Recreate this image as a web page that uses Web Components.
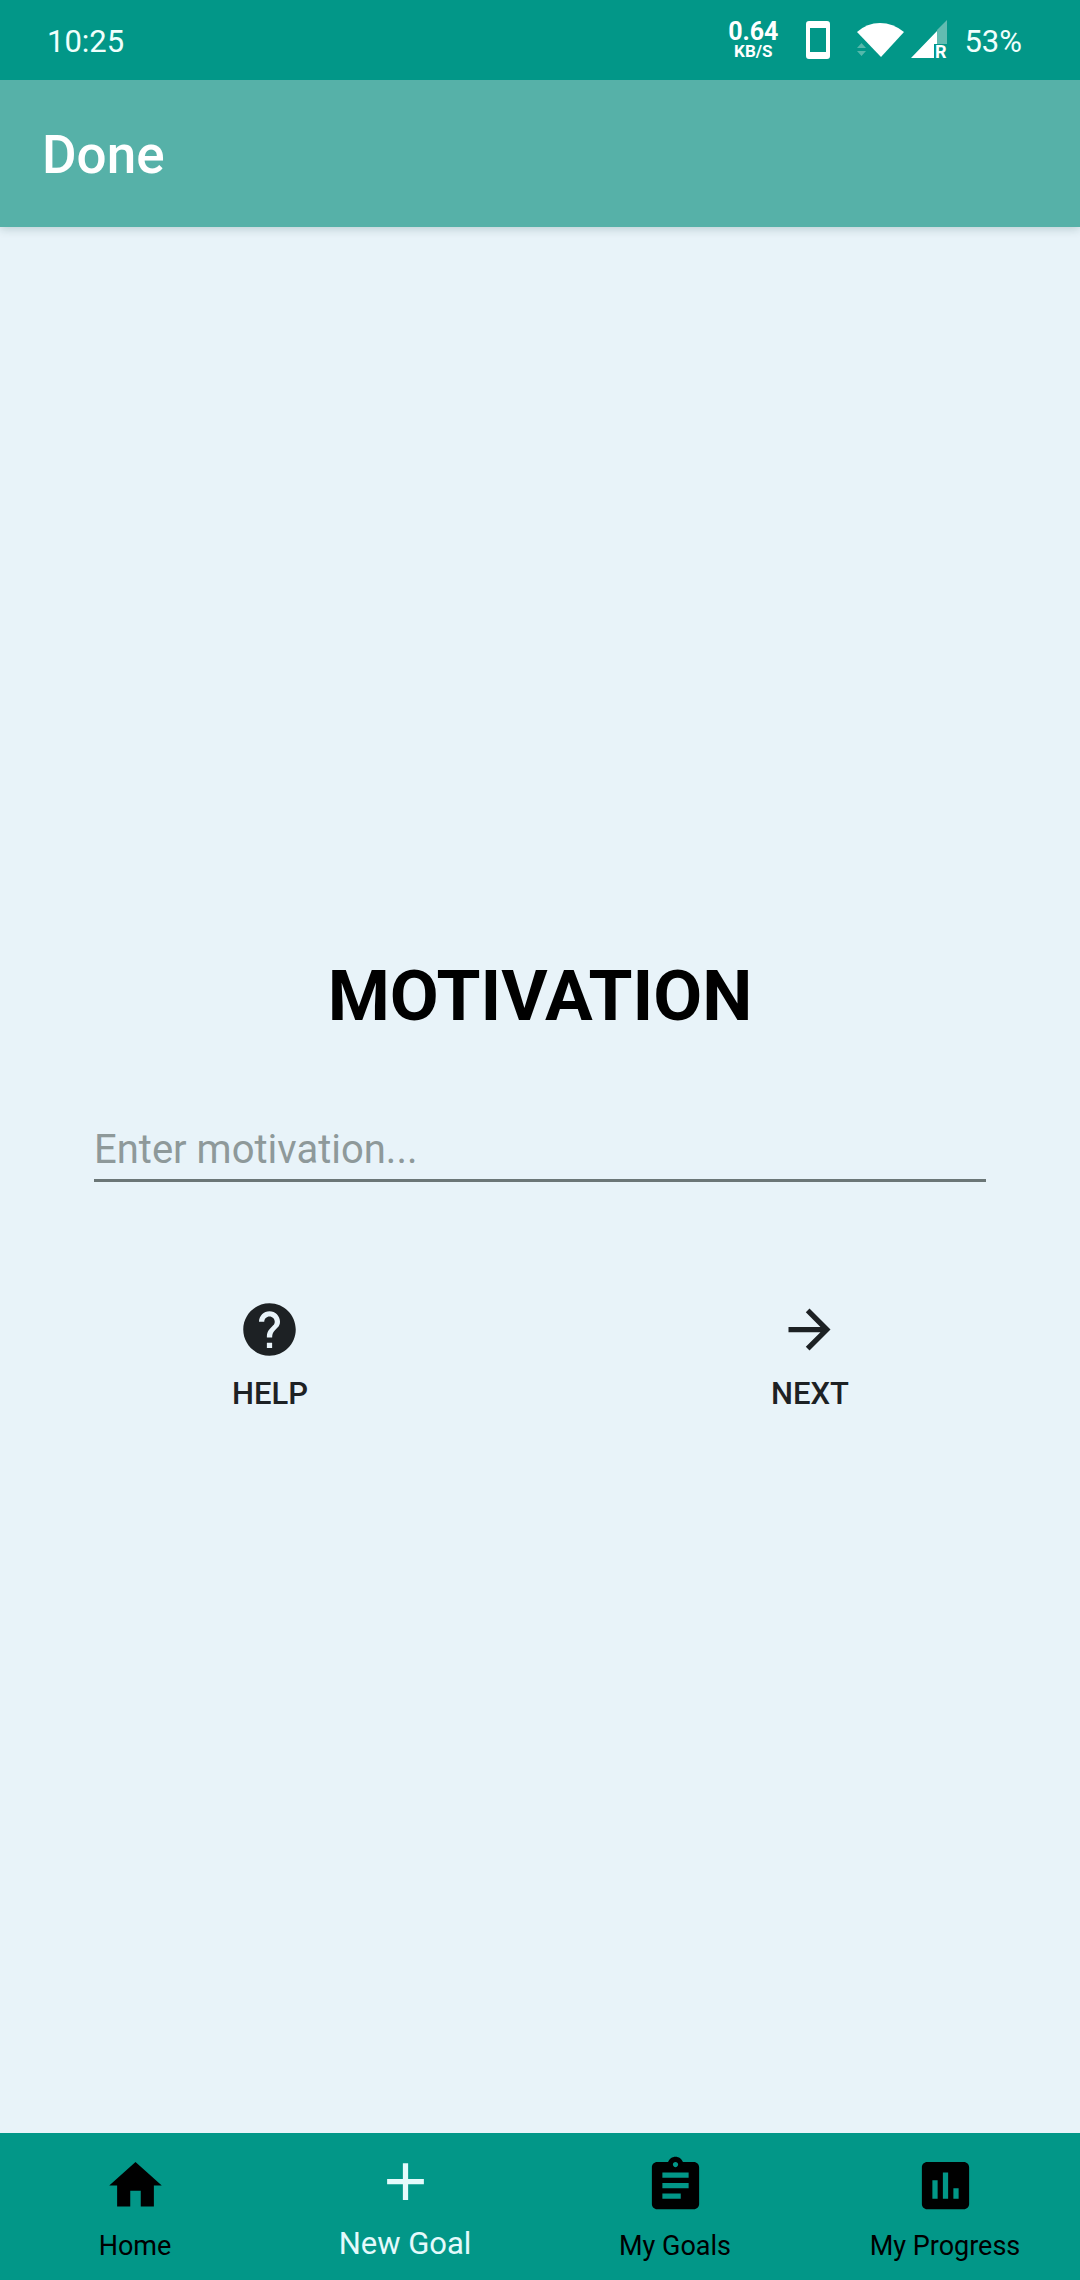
<!DOCTYPE html>
<html lang="en">
<head>
<meta charset="utf-8">
<meta name="viewport" content="width=device-width, initial-scale=1">
<title>Motivation</title>
<style>
  html, body { margin: 0; height: 100%; }
  body { font-family: Roboto, "Noto Sans", sans-serif; background: #e8f3f9; }
</style>
</head>
<body>
<goal-app></goal-app>
<script>
const ICONS = {
  help: '<path d="M12 2C6.48 2 2 6.48 2 12s4.48 10 10 10 10-4.48 10-10S17.52 2 12 2zm1 17h-2v-2h2v2zm2.070-7.750l-.9.920C13.450 12.900 13 13.500 13 15h-2v-.5c0-1.100.450-2.100 1.170-2.830l1.240-1.260c.370-.360.590-.860.590-1.410 0-1.100-.9-2-2-2s-2 .9-2 2H8c0-2.210 1.790-4 4-4s4 1.790 4 4c0 .880-.360 1.680-.930 2.250z"/>',
  next: '<path d="M12 4l-1.410 1.410L16.170 11H4v2h12.170l-5.580 5.590L12 20l8-8z"/>',
  home: '<path d="M10 20v-6h4v6h5v-8h3L12 3 2 12h3v8z"/>',
  add: '<path d="M19 13h-6v6h-2v-6H5v-2h6V5h2v6h6v2z"/>',
  goals: '<path d="M19 3h-4.180C14.400 1.840 13.300 1 12 1c-1.300 0-2.400.840-2.820 2H5c-1.100 0-2 .9-2 2v14c0 1.100.9 2 2 2h14c1.100 0 2-.9 2-2V5c0-1.100-.9-2-2-2zm-7 0c.550 0 1 .450 1 1s-.450 1-1 1-1-.450-1-1 .450-1 1-1zm2 14H7v-2h7v2zm3-4H7v-2h10v2zm0-4H7V7h10v2z"/>',
  progress: '<path d="M19 3H5c-1.100 0-2 .9-2 2v14c0 1.100.9 2 2 2h14c1.100 0 2-.9 2-2V5c0-1.100-.9-2-2-2zM9 17H7v-7h2v7zm4 0h-2V7h2v10zm4 0h-2v-4h2v4z"/>'
};

class BaseElement extends HTMLElement {
  constructor() { super(); this.attachShadow({ mode: 'open' }); }
  connectedCallback() { this.shadowRoot.innerHTML = this.render(); }
}

customElements.define('app-icon', class extends BaseElement {
  render() {
    return `<style>:host{display:block;width:63px;height:63px}svg{display:block;width:100%;height:100%;fill:currentColor}</style>
      <svg viewBox="0 0 24 24" aria-hidden="true">${ICONS[this.getAttribute('name')]}</svg>`;
  }
});

customElements.define('status-bar', class extends BaseElement {
  render() {
    return `<style>
      :host{display:flex;align-items:center;justify-content:space-between;position:relative;z-index:1;height:80px;padding:0 58px 0 47px;background:#029788;color:#f0fffc;font-size:31px;line-height:36px}
      .right{display:flex;align-items:center}
      time,.battery{padding-top:3px}
      .rate{display:flex;flex-direction:column;align-items:center;color:#fff;font-weight:700;font-size:25px;line-height:22px}
      .rate small{font-size:17px;line-height:17px}
      svg{display:block}
      .phone{margin-left:28px}
      .wifi{margin-left:26px}
      .signal{margin-left:7px}
      .battery{margin-left:13px}
    </style>
    <time>10:25</time>
    <div class="right">
      <div class="rate"><span>0.64</span><small>KB/S</small></div>
      <svg class="phone" width="24" height="38" viewBox="0 0 24 38"><path fill="#fff" fill-rule="evenodd" d="M3 0H21Q24 0 24 3V35Q24 38 21 38H3Q0 38 0 35V3Q0 0 3 0ZM4 7V31H20V7Z"/></svg>
      <svg class="wifi" width="48" height="38" viewBox="0 0 48 38"><path fill="#fff" d="M1 11Q11 2 24 2T48 11L25 36Z"/><path fill="#55b8ab" d="M1 27L5.500 22 10 27ZM1 30H10L5.500 35Z"/></svg>
      <svg class="signal" width="40" height="48" viewBox="0 -4 40 48"><path fill="#62bcb1" d="M26 10L36 0V24H26Z"/><path fill="#fff" d="M0 38L26 11V24H23V38Z"/><text x="24" y="38" font-size="18" font-weight="700" fill="#fff">R</text></svg>
      <span class="battery">53%</span>
    </div>`;
  }
});

customElements.define('app-bar', class extends BaseElement {
  render() {
    return `<style>
      :host{display:flex;align-items:center;box-sizing:border-box;height:147px;padding:3px 42px 0;background:#56b1a8;color:#fff;box-shadow:0 2px 9px rgba(0,60,55,.2)}
      h1{margin:0;font-size:53px;line-height:62px;font-weight:500}
    </style><h1><slot></slot></h1>`;
  }
});

customElements.define('icon-button', class extends BaseElement {
  render() {
    return `<style>
      :host{display:flex;justify-content:center;flex:1}
      button{display:flex;flex-direction:column;align-items:center;gap:14px;border:0;padding:0;background:none;color:#1d2124;font:500 31px/38px Roboto,"Noto Sans",sans-serif;cursor:pointer}
    </style><button type="button"><app-icon name="${this.getAttribute('icon')}"></app-icon><slot></slot></button>`;
  }
});

customElements.define('motivation-form', class extends BaseElement {
  render() {
    return `<style>
      :host{display:flex;flex-direction:column;justify-content:center;flex:1}
      h2{margin:0 0 80px;text-align:center;font-size:71px;line-height:98px;font-weight:700;color:#000}
      .field{display:flex;margin:0 94px}
      input{flex:1;min-width:0;height:57px;box-sizing:border-box;border:0;border-bottom:3px solid #6b7677;border-radius:0;padding:0 0 6px;background:none;outline:0;color:#1d2124;font:400 40px/48px Roboto,"Noto Sans",sans-serif}
      input::placeholder{color:#8e999a;opacity:1}
      .actions{display:flex;margin-top:116px}
    </style>
    <h2 id="title">MOTIVATION</h2>
    <div class="field"><input type="text" aria-labelledby="title" placeholder="Enter motivation..."></div>
    <div class="actions">
      <icon-button icon="help">HELP</icon-button>
      <icon-button icon="next">NEXT</icon-button>
    </div>`;
  }
});

customElements.define('nav-item', class extends BaseElement {
  render() {
    return `<style>
      :host{display:flex;flex:1}
      a{flex:1;display:flex;flex-direction:column;align-items:center;justify-content:space-between;box-sizing:border-box;padding:21px 0 16px;color:#000;text-decoration:none;font-size:27px;line-height:36px}
      :host([selected]) a{padding-top:17px;color:#e4fafb;font-size:31px;line-height:40px}
    </style><a href="#"><app-icon name="${this.getAttribute('icon')}"></app-icon><span><slot></slot></span></a>`;
  }
});

customElements.define('bottom-nav', class extends BaseElement {
  render() {
    return `<style>:host{display:block;background:#029788}nav{display:flex;height:147px}</style>
    <nav>
      <nav-item icon="home">Home</nav-item>
      <nav-item icon="add" selected>New Goal</nav-item>
      <nav-item icon="goals">My Goals</nav-item>
      <nav-item icon="progress">My Progress</nav-item>
    </nav>`;
  }
});

customElements.define('goal-app', class extends BaseElement {
  render() {
    return `<style>:host{display:flex;flex-direction:column;min-height:100%}</style>
      <status-bar></status-bar><app-bar>Done</app-bar><motivation-form></motivation-form><bottom-nav></bottom-nav>`;
  }
});
</script>
</body>
</html>
